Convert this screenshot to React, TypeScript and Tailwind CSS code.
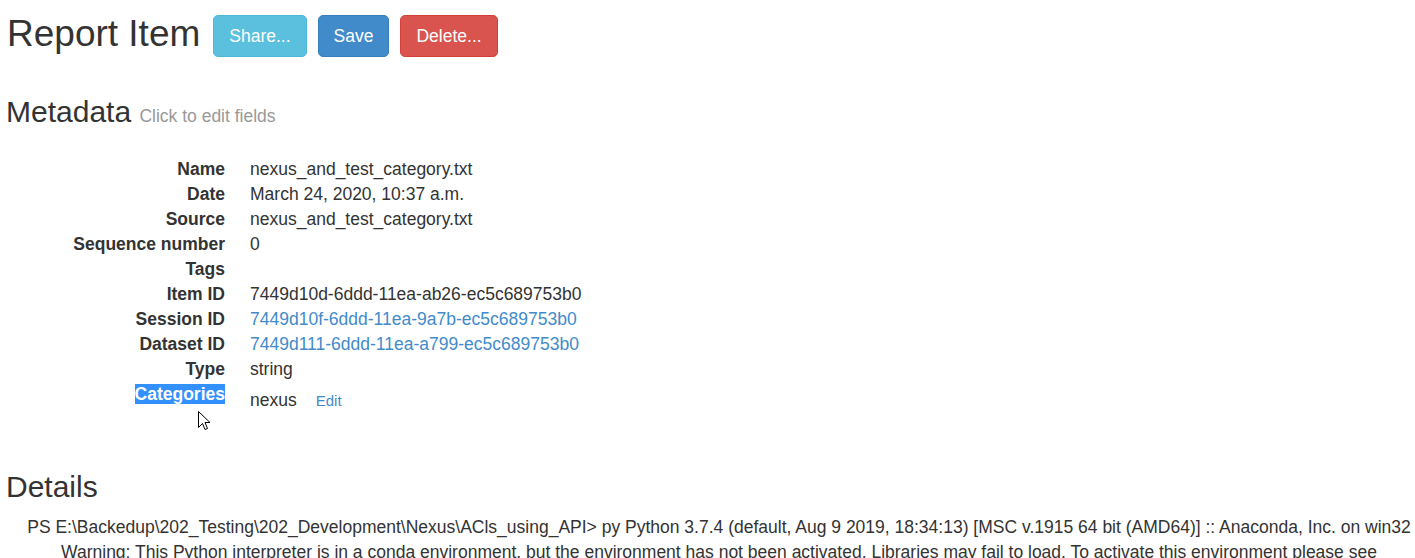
import React from 'react';

interface Field {
  label: string;
  value: string;
  link?: boolean;
}

const fields: Field[] = [
  { label: 'Name', value: 'nexus_and_test_category.txt' },
  { label: 'Date', value: 'March 24, 2020, 10:37 a.m.' },
  { label: 'Source', value: 'nexus_and_test_category.txt' },
  { label: 'Sequence number', value: '0' },
  { label: 'Tags', value: '' },
  { label: 'Item ID', value: '7449d10d-6ddd-11ea-ab26-ec5c689753b0' },
  { label: 'Session ID', value: '7449d10f-6ddd-11ea-9a7b-ec5c689753b0', link: true },
  { label: 'Dataset ID', value: '7449d111-6ddd-11ea-a799-ec5c689753b0', link: true },
  { label: 'Type', value: 'string' },
];

const detailLines = [
  'PS E:\\Backedup\\202_Testing\\202_Development\\Nexus\\ACls_using_API> py Python 3.7.4 (default, Aug 9 2019, 18:34:13) [MSC v.1915 64 bit (AMD64)] :: Anaconda, Inc. on win32',
  'Warning: This Python interpreter is in a conda environment, but the environment has not been activated. Libraries may fail to load. To activate this environment please see',
];

function Btn({ children, className }: { children: React.ReactNode; className: string }) {
  return (
    <button
      className={`h-[42px] px-[15px] mt-[4px] rounded-[5px] border text-[17.5px] leading-[25px] text-white ${className}`}
    >
      {children}
    </button>
  );
}

function Cursor() {
  return (
    <svg
      className="absolute left-[197px] top-[410px]"
      width="14"
      height="22"
      viewBox="0 0 14 22"
    >
      <path
        d="M1.5 1.5 L1.5 17.5 L5.5 13.5 L8 19.5 L10.5 18.5 L8 12.5 L13 12.5 Z"
        fill="#fff"
        stroke="#000"
        strokeWidth="1"
        strokeLinejoin="miter"
      />
    </svg>
  );
}

export default function App() {
  return (
    <div
      className="relative min-h-[558px] bg-white pl-[6px] text-[#333] overflow-hidden"
      style={{ fontFamily: '"Liberation Sans", Arial, sans-serif' }}
    >
      {/* Title + actions */}
      <div className="flex items-start pt-[11px]">
        <h1 className="h-[41px] mt-[2px] ml-[1px] text-[37px] leading-[41px] mr-[13px]">Report Item</h1>
        <div className="flex gap-[11px]">
          <Btn className="bg-[#5bc0de] border-[#46b8da]">Share...</Btn>
          <Btn className="bg-[#428bca] border-[#357ebd]">Save</Btn>
          <Btn className="bg-[#d9534f] border-[#d43f3a]">Delete...</Btn>
        </div>
      </div>

      {/* Metadata */}
      <h2 className="mt-[38px] text-[30px] leading-[33px]">
        Metadata <span className="text-[17.5px] text-[#999]">Click to edit fields</span>
      </h2>

      <dl className="mt-[24px] -ml-[1px] text-[17.5px] leading-[25px]">
        {fields.map((f) => (
          <div key={f.label} className="flex">
            <dt className="w-[220px] shrink-0 text-right font-bold">{f.label}</dt>
            <dd className={`ml-[25px] h-[25px] ${f.link ? 'text-[#428bca]' : ''}`}>{f.value}</dd>
          </div>
        ))}
        <div className="flex">
          <dt className="w-[220px] shrink-0 text-right font-bold">
            <span className="bg-[#3390ff] text-white">Categories</span>
          </dt>
          <dd className="ml-[25px] pt-[6px] flex items-baseline">
            <span>nexus</span>
            <span className="ml-[19px] text-[15px] text-[#428bca]">Edit</span>
          </dd>
        </div>
      </dl>

      {/* Details */}
      <h2 className="mt-[57px] text-[30px] leading-[33px]">Details</h2>
      <div className="mt-[12px] ml-[17px] text-center text-[17.5px] leading-[25px]">
        {detailLines.map((l) => (
          <div key={l} className="whitespace-nowrap">
            {l}
          </div>
        ))}
      </div>

      <Cursor />
    </div>
  );
}
